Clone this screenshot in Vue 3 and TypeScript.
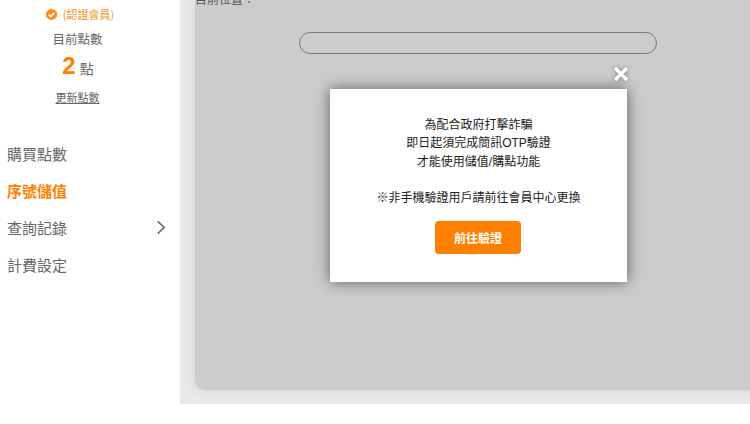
<script setup lang="ts">
const menu = [
  { label: '購買點數', active: false, arrow: false },
  { label: '序號儲值', active: true, arrow: false },
  { label: '查詢記錄', active: false, arrow: true },
  { label: '計費設定', active: false, arrow: false },
]
</script>

<template>
  <div class="page">
    <aside class="sidebar">
      <div class="member">
        <div class="badge">
          <svg class="check" viewBox="0 0 24 24" width="13" height="13">
            <path fill="#ff8a14" d="M12 1l3 2.200 3.700-.1 1.100 3.500 3 2.200L21.600 12l1.200 3.200-3 2.200-1.100 3.500-3.700-.1L12 23l-3-2.200-3.700.1-1.100-3.500-3-2.200L2.400 12 1.200 8.800l3-2.200 1.100-3.500 3.700.1z" />
            <path fill="none" stroke="#fff" stroke-width="3" d="M7 12.300l3.500 3.500L17 9" />
          </svg>
          <span>(認證會員)</span>
        </div>
        <div class="points-label">目前點數</div>
        <div class="points"><b>2</b><span>點</span></div>
        <a class="refresh">更新點數</a>
      </div>
      <nav class="menu">
        <div v-for="item in menu" :key="item.label" class="menu-item" :class="{ active: item.active }">
          <span>{{ item.label }}</span>
          <svg v-if="item.arrow" class="arrow" viewBox="0 0 10 16" width="10" height="15">
            <path fill="none" stroke="#666" stroke-width="1.700" d="M1.500 1.500L8.500 8l-7 6.500" />
          </svg>
        </div>
      </nav>
    </aside>
    <main class="main">
      <section class="card">
        <div class="crumb">目前位置：</div>
        <div class="search"></div>
      </section>
      <div class="overlay">
        <div class="dialog">
          <button class="close" aria-label="close">
            <svg viewBox="0 0 16 16" width="16" height="16">
              <path stroke="#fff" stroke-width="3.200" d="M2 2l12 12M14 2L2 14" />
            </svg>
          </button>
          <p>為配合政府打擊詐騙</p>
          <p>即日起須完成簡訊OTP驗證</p>
          <p>才能使用儲值/購點功能</p>
          <p class="note">※非手機驗證用戶請前往會員中心更換</p>
          <button class="go">前往驗證</button>
        </div>
      </div>
    </main>
  </div>
</template>

<style>
html, body { margin: 0; background: #fff; overflow: hidden; }
</style>

<style scoped>
.page {
  display: flex;
  width: 750px;
  height: 404px;
  font-family: "Noto Sans CJK TC", "Liberation Sans", sans-serif;
  color: #666;
}
.sidebar {
  width: 180px;
  flex: none;
  background: #fff;
  box-sizing: border-box;
  padding-top: 6px;
}
.member {
  width: 155px;
  display: flex;
  flex-direction: column;
  align-items: center;
}
.badge {
  display: flex;
  align-items: center;
  gap: 5px;
  height: 16px;
  font-size: 11px;
  color: #ff8f24;
  padding-left: 4px;
}
.points-label {
  margin-top: 7px;
  font-size: 12.500px;
  line-height: 19px;
}
.points {
  display: flex;
  align-items: baseline;
  gap: 4px;
  margin-top: 3px;
  padding-left: 1px;
  height: 30px;
  line-height: 30px;
  font-size: 14px;
}
.points b {
  font-size: 24px;
  color: #ff8000;
  font-family: "Liberation Sans", sans-serif;
}
.refresh {
  margin-top: 8px;
  font-size: 11px;
  line-height: 16px;
  text-decoration: underline;
}
.menu {
  margin-top: 30px;
  padding: 0 14px 0 7px;
}
.menu-item {
  display: flex;
  align-items: center;
  justify-content: space-between;
  height: 37px;
  font-size: 15px;
}
.menu-item.active {
  color: #ff8000;
  font-weight: 700;
}
.main {
  flex: 1;
  position: relative;
  background: #e9e9e9;
  padding: 0 0 14px 15px;
  overflow: hidden;
}
.card {
  display: flow-root;
  height: 100%;
  background: #ccc;
  border-bottom-left-radius: 10px;
  box-shadow: 0 0 12px rgba(0, 0, 0, 0.1);
  box-sizing: border-box;
  margin-right: -10px;
}
.crumb {
  margin-top: -10px;
  font-size: 12px;
  line-height: 18px;
  color: #555;
}
.search {
  width: 356px;
  height: 20px;
  margin: 24px 0 0 104px;
  border: 1px solid #7b7b7b;
  border-radius: 11px;
}
.overlay {
  position: absolute;
  inset: 0;
}
.dialog {
  position: absolute;
  left: 150px;
  top: 89px;
  width: 297px;
  height: 193px;
  box-sizing: border-box;
  padding-top: 27px;
  background: #fff;
  box-shadow: 0 0 14px rgba(0, 0, 0, 0.55);
  text-align: center;
  font-family: "Liberation Sans", "Noto Sans CJK TC", sans-serif;
  font-size: 12px;
  color: #222;
}
.dialog p {
  margin: 0;
  line-height: 18.250px;
}
.dialog .note {
  margin-top: 18.250px;
}
.close {
  position: absolute;
  right: -2px;
  top: -23px;
  padding: 0;
  border: 0;
  background: none;
  line-height: 0;
  filter: drop-shadow(0 0 2px rgba(0, 0, 0, 0.4));
}
.go {
  display: block;
  width: 86px;
  height: 33px;
  margin: 14px 0 0 105px;
  border: 0;
  border-radius: 4px;
  background: #ff8000;
  color: #fff;
  font: 700 12px "Noto Sans CJK TC", sans-serif;
}
</style>
